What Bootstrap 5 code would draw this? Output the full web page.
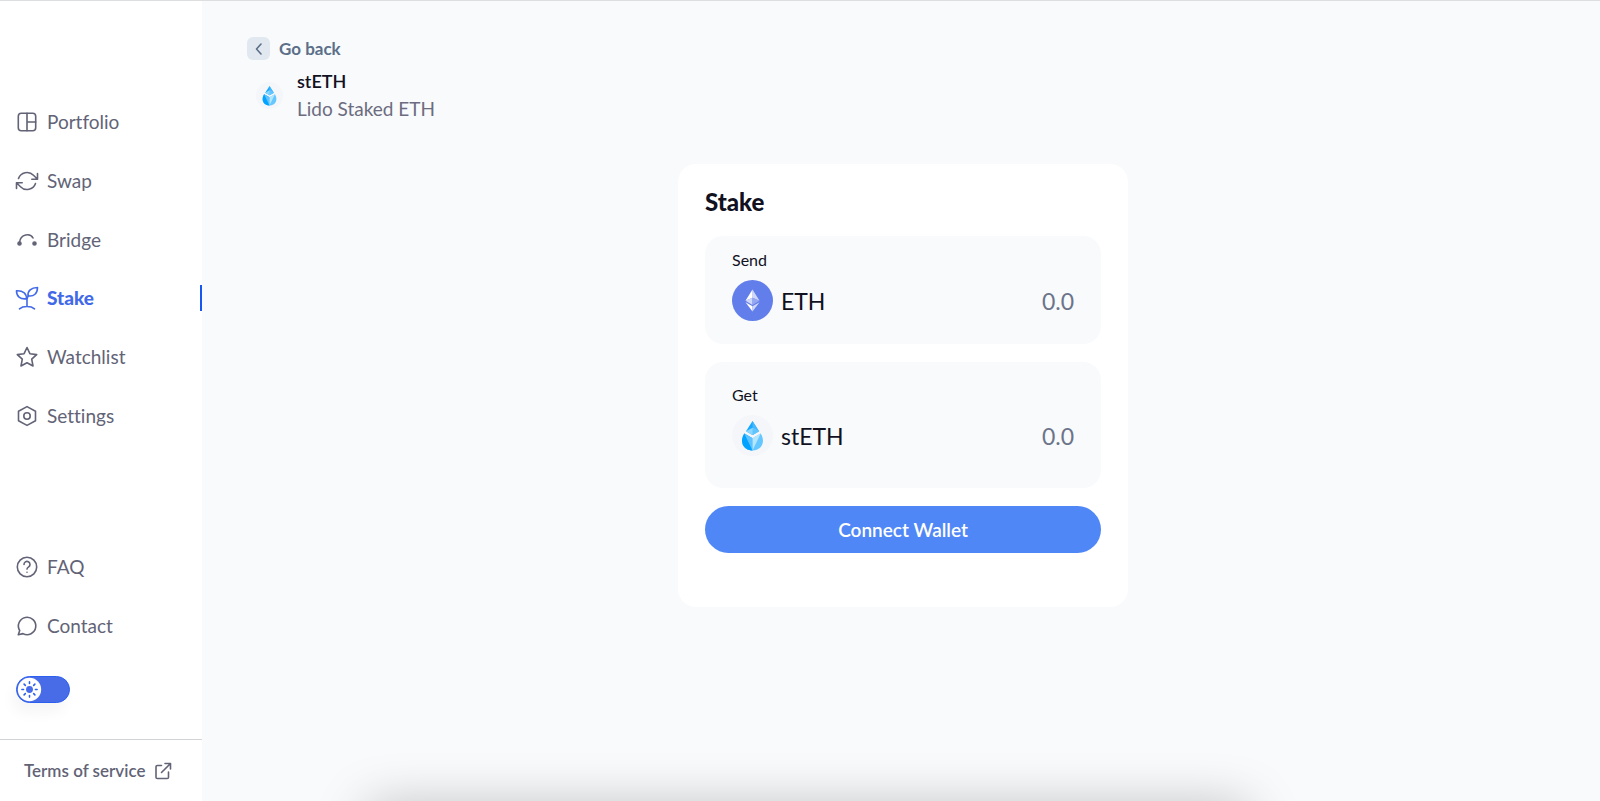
<!DOCTYPE html>
<html lang="en">
<head>
<meta charset="utf-8">
<meta name="viewport" content="width=device-width, initial-scale=1">
<title>Stake stETH</title>
<link href="https://cdn.jsdelivr.net/npm/bootstrap@5.3.0/dist/css/bootstrap.min.css" rel="stylesheet">
<style>
  body { font-family: Lato, "Liberation Sans", sans-serif; font-variant-ligatures: none; background: #f8fafc; color: #11111f; }
  a { text-decoration: none; }
  svg { flex: none; }
  .app-shell { min-height: 100vh; border-top: 1px solid #dddee0; }
  .side-panel { width: 202px; flex: none; background: #fff; padding-top: 92px; color: #626376; }
  .side-list a { color: inherit; font-size: 19px; line-height: 26px; padding-left: 15px; gap: 8px; }
  .main-list { min-height: 352px; }
  .help-list { min-height: 117px; margin-top: 93px; }
  .side-list a.current { color: #4169e8; font-weight: 900; border-right: 2px solid #1557f0; }
  .line-icon { fill: none; stroke: currentColor; stroke-width: 1.6; stroke-linecap: round; stroke-linejoin: round; }
  .theme-switch { margin: 21px 0 0 16px; width: 54px; height: 27px; }
  .theme-switch input { appearance: none; width: 54px; height: 27px; margin: 0; border-radius: 14px; background: #486be8; border: 1px solid #2b5ff0; box-shadow: -4px 10px 14px rgba(0,0,0,.04); }
  .theme-switch svg { position: absolute; left: 1px; top: 1px; pointer-events: none; }
  .terms { border-top: 1px solid #d3d4d8; height: 62px; padding-left: 24px; gap: 9px; font-size: 17px; font-weight: 600; color: #626376; }
  .content-area { padding: 36px 41px 40px 45px; }
  .go-back { gap: 9px; font-size: 17px; line-height: 23px; font-weight: 700; color: #5b6f89; }
  .back-box { width: 23px; height: 23px; border-radius: 6px; background: #e1e8f0; }
  .token-head { padding: 8px 0 0 9px; gap: 14px; font-size: 19px; line-height: 27px; }
  .token-head h1 { font-size: 18px; line-height: 27px; font-weight: 600; }
  .token-head p { color: #6c6c80; }
  .stake-card { width: 100%; max-width: 450px; margin: 42px auto 0; padding: 26px 27px 54px; border-radius: 18px; background: #fff; }
  .stake-card h2 { font-size: 24px; line-height: 24px; font-weight: 900; margin: 0 0 22px; }
  .amount-box { background: #f8fafc; border-radius: 18px; padding: 13px 27px 23px; margin-bottom: 18px; }
  .amount-box.receive { padding: 22px 27px 32px; }
  .amount-box label { font-size: 16px; line-height: 22px; margin-bottom: 9px; }
  .token-name { font-size: 23px; line-height: 32px; }
  .amount-box input { width: 120px; border: 0; padding: 0; background: none; text-align: right; font-size: 23px; line-height: 32px; color: #6c748a; }
  .amount-box input::placeholder { color: #6c748a; opacity: 1; }
  .connect { height: 47px; border-radius: 24px; background: #4f87f7; border: 0; color: #fff; font-size: 19px; line-height: 27px; font-weight: 600; }
  .dock-shade { position: fixed; left: 23%; right: 22%; bottom: -46px; height: 40px; box-shadow: 0 0 52px rgba(0,0,0,.27); pointer-events: none; }
</style>
</head>
<body>
<svg width="0" height="0" class="position-absolute" aria-hidden="true">
  <symbol id="lido" viewBox="0 0 41 41">
    <circle cx="20.5" cy="20.5" r="20.5" fill="#f4f6f9"/>
    <path d="M20.5 6 27 16.2 20.5 20 14 16.2Z" fill="#18a8ff"/>
    <path d="M20.5 6 27 16.2 20.5 20Z" fill="#45b8ff"/>
    <path d="M14 16.2 20.5 12.7 27 16.2 20.5 20Z" fill="#8ad6ff"/>
    <path d="M20.5 12.7 27 16.2 20.5 20Z" fill="#60c5ff"/>
    <path d="M12.3 18.5 20.5 23.3 28.7 18.5C34 27 29.500 35.500 20.500 35.500S7 27 12.300 18.500Z" fill="#65c7ff"/>
    <path d="M12.300 18.500 20.500 23.300V35.500C11.500 35.500 7 27 12.300 18.500Z" fill="#00a3ff"/>
    <path d="M12.300 18.500 20.500 23.300V35.500Z" fill="#5dc2ff"/>
    <path d="M28.700 18.500 20.500 23.300V35.500Z" fill="#b5e5ff"/>
  </symbol>
</svg>
<div class="app-shell d-flex">
  <aside class="side-panel d-flex flex-column">
    <nav aria-label="Main">
      <ul class="side-list main-list list-unstyled d-flex flex-column mb-0">
        <li class="flex-fill d-flex align-items-center"><a href="#" class="d-flex align-items-center w-100">
          <svg class="line-icon" width="24" height="24" viewBox="0 0 24 24"><rect x="3.300" y="3.300" width="17.400" height="17.400" rx="3"/><path d="M12 3.300v17.400M12 12h8.700"/></svg>Portfolio</a></li>
        <li class="flex-fill d-flex align-items-center"><a href="#" class="d-flex align-items-center w-100">
          <svg class="line-icon" width="24" height="24" viewBox="0 0 24 24"><path d="M22.500 4.500v5.700h-5.700M1.500 19.500v-5.700h5.700M3.500 9.500A9 9 0 0 1 18.500 6.300l4 3.900M20.500 14.500A9 9 0 0 1 5.500 17.700l-4-3.900"/></svg>Swap</a></li>
        <li class="flex-fill d-flex align-items-center"><a href="#" class="d-flex align-items-center w-100">
          <svg class="line-icon" width="24" height="24" viewBox="0 0 24 24"><path d="M4.500 14.500C5.500 5.500 15.500 5 18 10"/><circle cx="4.500" cy="15.500" r="1.500" fill="currentColor"/><circle cx="19.500" cy="15.500" r="1.500" fill="currentColor"/></svg>Bridge</a></li>
        <li class="flex-fill d-flex align-items-center"><a href="#" class="current d-flex align-items-center w-100" aria-current="page">
          <svg class="line-icon" width="24" height="24" viewBox="0 0 24 24"><path d="M12 20.500V12.500M4.500 22.800C8 19.800 16 19.800 19.500 22.800M11.500 12.800C5 13.500 1.500 10.500 1.500 4.800 8 4.500 11.500 7 11.500 12.800ZM13 9.800C12.500 5 16 1.500 22.500 1.500 22.500 7.500 19 10.800 13 9.800ZM12 13Q12.500 11 13.500 9.500"/></svg>Stake</a></li>
        <li class="flex-fill d-flex align-items-center"><a href="#" class="d-flex align-items-center w-100">
          <svg class="line-icon" width="24" height="24" viewBox="0 0 24 24"><path d="m12 2.500 2.900 6.200 6.800.9-5 4.600 1.300 6.800-6-3.300L6 21l1.300-6.800-5-4.600 6.800-.9Z"/></svg>Watchlist</a></li>
        <li class="flex-fill d-flex align-items-center"><a href="#" class="d-flex align-items-center w-100">
          <svg class="line-icon" width="24" height="24" viewBox="0 0 24 24"><path d="M12 2.600 20.500 7.200v9.600L12 21.400 3.500 16.800V7.200Z"/><circle cx="12" cy="12" r="3.200"/></svg>Settings</a></li>
      </ul>
    </nav>
    <ul class="side-list help-list list-unstyled d-flex flex-column mb-0">
      <li class="flex-fill d-flex align-items-center"><a href="#" class="d-flex align-items-center w-100">
        <svg class="line-icon" width="24" height="24" viewBox="0 0 24 24"><circle cx="12" cy="12" r="9.700"/><path d="M9 9.500a3 3 0 1 1 4.700 2.400c-1.200.8-1.700 1.200-1.700 2.200M12 17.200v.1"/></svg>FAQ</a></li>
      <li class="flex-fill d-flex align-items-center"><a href="#" class="d-flex align-items-center w-100">
        <svg class="line-icon" width="24" height="24" viewBox="0 0 24 24"><path d="M3.300 20.800 4.700 16.500A8.700 8.700 0 1 1 8 19.600Z"/></svg>Contact</a></li>
    </ul>
    <div class="theme-switch position-relative">
      <input type="checkbox" role="switch" aria-label="Light theme" checked class="d-block">
      <svg width="25" height="25" viewBox="0 0 24 24"><circle cx="12" cy="12" r="11.200" fill="#fff"/><circle cx="12" cy="12" r="3.300" fill="#486be8"/><path d="M12 4.700v1.600M12 17.700v1.600M4.700 12h1.600M17.700 12h1.600M6.800 6.800l1.200 1.200M16 16l1.200 1.200M6.800 17.200 8 16M16 8l1.200-1.200" stroke="#2b5ff0" stroke-width="1.500" stroke-linecap="round"/></svg>
    </div>
    <a href="#" class="terms d-flex align-items-center mt-auto">Terms of service
      <svg class="line-icon" width="18" height="18" viewBox="0 0 18 18"><path d="M7.500 3.500H3.300Q2 3.500 2 4.800v10.400q0 1.300 1.300 1.300h9.900q1.300 0 1.300-1.300V10M11 1.500h5.500V7M16.500 1.500 7.500 10.500"/></svg></a>
  </aside>
  <main class="content-area flex-grow-1">
    <a href="#" class="go-back d-flex align-items-center">
      <span class="back-box d-flex align-items-center justify-content-center"><svg class="line-icon" width="12" height="12" viewBox="0 0 12 12"><path d="M8 1 3.500 6 8 11"/></svg></span>Go back</a>
    <div class="token-head d-flex align-items-center">
      <svg width="27" height="27" aria-hidden="true"><use href="#lido"/></svg>
      <div><h1 class="mb-0">stETH</h1><p class="mb-0">Lido Staked ETH</p></div>
    </div>
    <form class="stake-card">
      <h2>Stake</h2>
      <div class="amount-box">
        <label for="send-amount" class="d-block">Send</label>
        <div class="d-flex align-items-center">
          <svg width="41" height="41" viewBox="0 0 41 41" aria-hidden="true"><circle cx="20.500" cy="20.500" r="20.500" fill="#627eea"/><path d="M20.500 9.500v8.200l7 3.100Z" fill="#d0d8f9"/><path d="m20.500 9.500-7 11.300 7-3.100Z" fill="#fff"/><path d="m13.500 20.800 7 4.200v-7.300Z" fill="#d0d8f9"/><path d="m27.500 20.800-7 4.200v-7.300Z" fill="#96a8f1"/><path d="m13.500 22.300 7 9.200v-5.200Z" fill="#fff"/><path d="m27.500 22.300-7 9.200v-5.200Z" fill="#d0d8f9"/></svg>
          <span class="token-name ms-2">ETH</span>
          <input id="send-amount" class="ms-auto" type="text" inputmode="decimal" placeholder="0.0">
        </div>
      </div>
      <div class="amount-box receive">
        <label for="get-amount" class="d-block">Get</label>
        <div class="d-flex align-items-center">
          <svg width="41" height="41" aria-hidden="true"><use href="#lido"/></svg>
          <span class="token-name ms-2">stETH</span>
          <input id="get-amount" class="ms-auto" type="text" inputmode="decimal" placeholder="0.0">
        </div>
      </div>
      <button type="button" class="connect btn w-100 p-0">Connect Wallet</button>
    </form>
  </main>
</div>
<div class="dock-shade"></div>
<script src="https://cdn.jsdelivr.net/npm/bootstrap@5.3.0/dist/js/bootstrap.bundle.min.js"></script>
</body>
</html>
